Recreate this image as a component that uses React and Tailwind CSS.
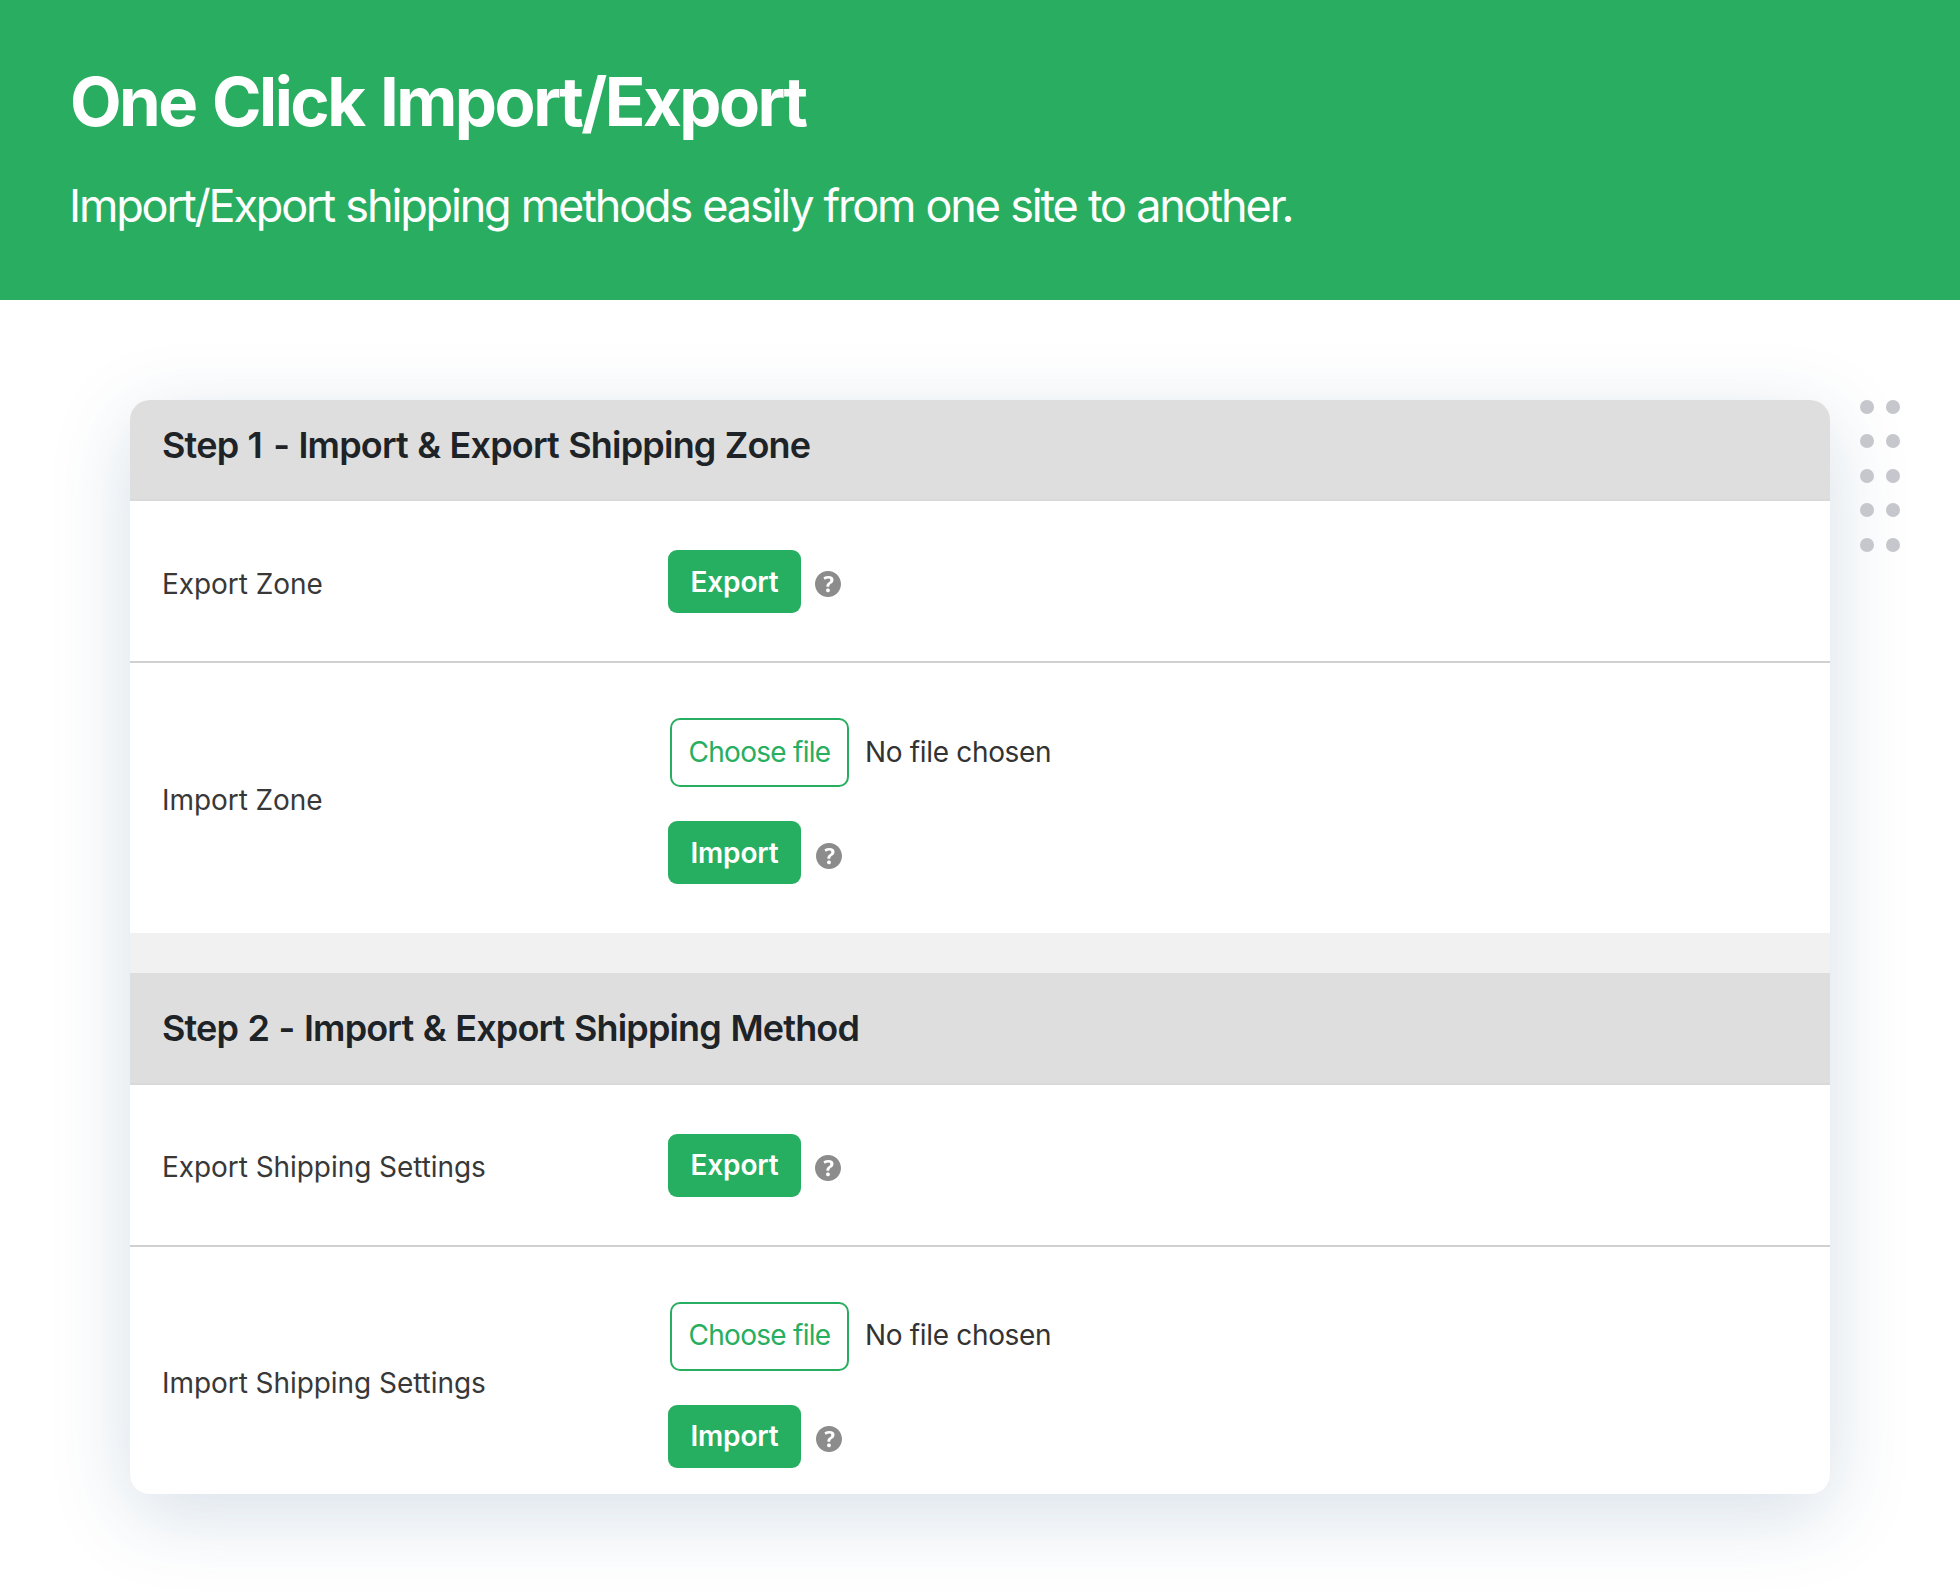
import React from "react";

function HelpIcon({ className = "" }) {
  return (
    <svg
      viewBox="3 3 14 14"
      className={`h-[26px] w-[26px] shrink-0 fill-[#8c8c8c] ${className}`}
      aria-label="Help"
    >
      <path d="M17 10c0-3.87-3.14-7-7-7-3.87 0-7 3.13-7 7s3.13 7 7 7c3.86 0 7-3.13 7-7zm-6.3 1.48H9.14v-.43c0-.38.08-.7.24-.98s.46-.57.88-.89c.41-.29.68-.53.81-.71.14-.18.2-.39.2-.62 0-.25-.09-.44-.28-.58-.19-.13-.45-.19-.79-.19-.58 0-1.25.19-2 .57l-.64-1.28c.87-.49 1.8-.74 2.77-.74.81 0 1.45.2 1.92.58.48.39.71.91.71 1.55 0 .43-.09.8-.29 1.11-.19.32-.57.67-1.11 1.06-.38.28-.61.49-.71.63-.1.15-.15.34-.15.57v.35zm-1.47 2.74c-.18-.17-.27-.42-.27-.73 0-.33.08-.58.26-.75s.43-.25.77-.25c.32 0 .57.09.75.26s.27.42.27.74c0 .3-.09.55-.27.72-.18.18-.43.27-.75.27-.33 0-.58-.09-.76-.26z" />
    </svg>
  );
}

function Action({ children, iconClass = "" }) {
  return (
    <div className="flex items-center">
      <button className="h-[63px] w-[133px] rounded-[9px] bg-[#26af61] text-[28px] leading-[62px] font-semibold tracking-[-0.15px] text-white">
        {children}
      </button>
      <HelpIcon className={iconClass} />
    </div>
  );
}

function Label({ children }) {
  return (
    <div className="w-[538px] shrink-0 pt-[4px] pl-[32px] text-[28px] leading-10 tracking-[-0.06px] text-[#383838]">
      {children}
    </div>
  );
}

function ExportRow({ label }) {
  return (
    <div className="flex items-center border-b-2 border-[#d0d0d0] pt-[49px] pb-[48px]">
      <Label>{label}</Label>
      <Action iconClass="mt-[5px] ml-[14px]">Export</Action>
    </div>
  );
}

function ImportRow({ label }) {
  return (
    <div className="flex items-center pt-[55px] pb-[49px]">
      <div className="-mt-[7px]">
        <Label>{label}</Label>
      </div>
      <div className="flex flex-col gap-[34px]">
        <div className="flex items-center">
          <button className="ml-[2px] h-[69px] w-[179px] rounded-[10px] border-2 border-[#27ae60] pb-[2px] text-[28px] leading-none tracking-[-0.72px] text-[#27ae60]">
            Choose file
          </button>
          <span className="pb-[2px] pl-[16px] text-[28px] leading-10 tracking-[-0.33px] text-[#333333]">
            No file chosen
          </span>
        </div>
        <Action iconClass="mt-[6px] ml-[15px]">Import</Action>
      </div>
    </div>
  );
}

const dots = Array.from({ length: 10 }, (_, i) => i);

export default function App() {
  return (
    <div className="flex h-[1594px] w-[1960px] flex-col overflow-hidden bg-white font-['Inter',sans-serif]">
      <header className="z-10 h-[300px] shrink-0 bg-[#29ae61] pt-[62px] pl-[70px] text-white">
        <h1 className="text-[67px] leading-[80px] font-bold tracking-[-2.52px] [word-spacing:3px]">
          One Click Import/Export
        </h1>
        <p className="-ml-px mt-[34px] text-[45px] leading-[60px] tracking-[-2.16px] [word-spacing:0.8px]">
          Import/Export shipping methods easily from one site to another.
        </p>
      </header>

      <main className="flex items-start pt-[100px] pl-[130px]">
        <section className="h-[1094px] w-[1700px] overflow-hidden rounded-[20px] bg-white shadow-[0_20px_80px_rgba(35,85,125,0.18)]">
          <h2 className="h-[101px] border-b-2 border-[#d9d9d9] bg-[#dedede] pt-[20px] pl-[32px] text-[36px] leading-[50px] font-semibold tracking-[-0.81px] text-[#1d2327] [word-spacing:1px]">
            Step <span className="mr-[2px]">1</span> - Import &amp; Export Shipping Zone
          </h2>
          <ExportRow label="Export Zone" />
          <ImportRow label="Import Zone" />
          <div className="h-10 bg-[#f1f1f1]" />
          <h2 className="h-[111.5px] border-b-2 border-[#d9d9d9] bg-[#dedede] pt-[30px] pl-[32px] text-[36px] leading-[50px] font-semibold tracking-[-0.84px] text-[#1d2327] [word-spacing:1.2px]">
            Step 2 - Import &amp; Export Shipping Method
          </h2>
          <ExportRow label="Export Shipping Settings" />
          <ImportRow label="Import Shipping Settings" />
        </section>

        <div className="z-10 ml-[30px] grid grid-cols-2 gap-x-[12px] gap-y-[20.4px]">
          {dots.map((i) => (
            <span key={i} className="h-[14px] w-[14px] rounded-full bg-[#c5c7cc]" />
          ))}
        </div>
      </main>
    </div>
  );
}
